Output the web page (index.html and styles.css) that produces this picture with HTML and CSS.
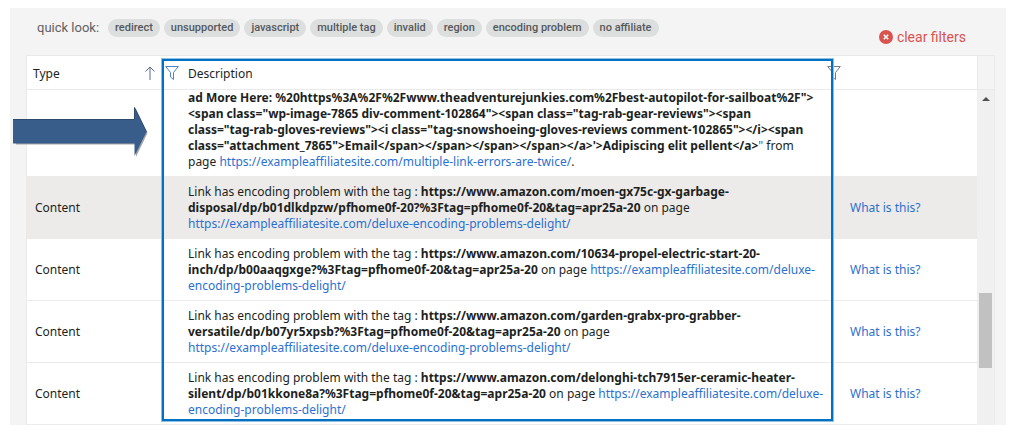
FILE: index.html
```html
<!DOCTYPE html>
<html lang="en">
<head>
<meta charset="utf-8">
<title>Link issues</title>
<link rel="stylesheet" href="styles.css">
</head>
<body>
<main class="panel">
  <header class="toolbar">
    <div class="quick">
      <span class="quick-label">quick look:</span>
      <div class="chips">
        <button class="chip" type="button">redirect</button>
        <button class="chip" type="button">unsupported</button>
        <button class="chip" type="button">javascript</button>
        <button class="chip" type="button">multiple tag</button>
        <button class="chip" type="button">invalid</button>
        <button class="chip" type="button">region</button>
        <button class="chip" type="button">encoding problem</button>
        <button class="chip" type="button">no affiliate</button>
      </div>
    </div>
    <button class="clear" type="button">
      <svg class="clear-icon" viewBox="0 0 14 14" aria-hidden="true"><circle cx="7" cy="7" r="7" fill="#d9534f"/><path d="M4.8 4.8l4.4 4.4M9.2 4.8l-4.4 4.4" stroke="#fff" stroke-width="1.5"/></svg>
      clear filters
    </button>
  </header>

  <div class="grid">
    <table class="table">
      <colgroup><col class="col-type"><col><col class="col-help"></colgroup>
      <thead>
        <tr>
          <th class="type" scope="col">
            <div class="head">
              <span>Type</span>
              <span class="tools">
                <svg class="sort" viewBox="0 0 10 14" aria-hidden="true"><path d="M5 14V1M.5 5.5L5 1l4.5 4.5" fill="none" stroke="#5a6a94"/></svg>
                <button class="filter" type="button" aria-label="Filter type"><svg viewBox="0 0 14 14" aria-hidden="true"><path d="M.7.5h12.6L8.5 6.5v7L5.5 11V6.5z" fill="none" stroke="#4a84d0"/></svg></button>
              </span>
            </div>
          </th>
          <th scope="col">
            <div class="head">
              <span>Description</span>
              <button class="filter" type="button" aria-label="Filter description"><svg viewBox="0 0 14 14" aria-hidden="true"><path d="M.7.5h12.6L8.5 6.5v7L5.5 11V6.5z" fill="none" stroke="#6b7c90"/></svg></button>
            </div>
          </th>
          <th scope="col"></th>
        </tr>
      </thead>
      <tbody>
        <tr class="partial">
          <td></td>
          <td><b>ad More Here: %20https%3A%2F%2Fwww.theadventurejunkies.com%2Fbest-autopilot-for-sailboat%2F"&gt;<br>&lt;span class="wp-image-7865 div-comment-102864"&gt;&lt;span class="tag-rab-gear-reviews"&gt;&lt;span<br>class="tag-rab-gloves-reviews"&gt;&lt;i class="tag-snowshoeing-gloves-reviews comment-102865"&gt;&lt;/i&gt;&lt;span<br>class="attachment_7865"&gt;Email&lt;/span&gt;&lt;/span&gt;&lt;/span&gt;&lt;/span&gt;&lt;/a&gt;'&gt;Adipiscing elit pellent&lt;/a&gt;</b><span class="quote">"</span> from<br>page <a href="#twice">https://exampleaffiliatesite.com/multiple-link-errors-are-twice/</a>.</td>
          <td></td>
        </tr>
        <tr class="selected">
          <td>Content</td>
          <td>Link has encoding problem with the tag : <b>https://www.amazon.com/moen-gx75c-gx-garbage-<br>disposal/dp/b01dlkdpzw/pfhome0f-20?%3Ftag=pfhome0f-20&amp;tag=apr25a-20</b> on page<br><a href="#delight">https://exampleaffiliatesite.com/deluxe-encoding-problems-delight/</a></td>
          <td><a href="#help">What is this?</a></td>
        </tr>
        <tr>
          <td>Content</td>
          <td>Link has encoding problem with the tag : <b>https://www.amazon.com/10634-propel-electric-start-20-<br>inch/dp/b00aaqgxge?%3Ftag=pfhome0f-20&amp;tag=apr25a-20</b> on page <a href="#delight">https://exampleaffiliatesite.com/deluxe-<br>encoding-problems-delight/</a></td>
          <td><a href="#help">What is this?</a></td>
        </tr>
        <tr>
          <td>Content</td>
          <td>Link has encoding problem with the tag : <b>https://www.amazon.com/garden-grabx-pro-grabber-<br>versatile/dp/b07yr5xpsb?%3Ftag=pfhome0f-20&amp;tag=apr25a-20</b> on page<br><a href="#delight">https://exampleaffiliatesite.com/deluxe-encoding-problems-delight/</a></td>
          <td><a href="#help">What is this?</a></td>
        </tr>
        <tr>
          <td>Content</td>
          <td>Link has encoding problem with the tag : <b>https://www.amazon.com/delonghi-tch7915er-ceramic-heater-<br>silent/dp/b01kkone8a?%3Ftag=pfhome0f-20&amp;tag=apr25a-20</b> on page <a href="#delight">https://exampleaffiliatesite.com/deluxe-<br>encoding-problems-delight/</a></td>
          <td><a href="#help">What is this?</a></td>
        </tr>
      </tbody>
    </table>
    <div class="rail" aria-hidden="true">
      <div class="rail-head"></div>
      <div class="track">
        <svg class="up" viewBox="0 0 8 4"><path d="M0 4L4 0l4 4z" fill="#505050"/></svg>
        <div class="thumb"></div>
      </div>
    </div>
    <div class="highlight"></div>
    <svg class="arrow" viewBox="0 0 136 52" aria-hidden="true"><path d="M3 14h120V2l11.500 24-11.500 24V37.500H3z" fill="#a5a5a5"/><path d="M0 12.500h121.500V.5L133.500 25l-12 24V36.500H0z" fill="#385d8a"/><path d="M0 12.500h121.500V.5L133.500 25" fill="none" stroke="#2c4a70"/></svg>
  </div>
</main>
</body>
</html>
```
FILE: styles.css
```css
* { box-sizing: border-box; }
body {
  margin: 0;
  padding: 8px 13px 22px 10px;
  background: #fff;
  color: #201f1e;
  font: 12px/16px "Noto Sans", "Open Sans", sans-serif;
}
button { border: 0; padding: 0; background: none; cursor: pointer; }
a { color: #2b70d0; text-decoration: none; }

.panel { padding: 0 11px 0 16px; background: #f4f4f4; }
.toolbar {
  display: flex;
  justify-content: space-between;
  align-items: flex-start;
  height: 47px;
  padding: 11px 29px 0 11px;
  font-family: Roboto, sans-serif;
}
.quick { display: flex; gap: 9px; }
.quick-label { color: #5f6064; font-size: 13px; line-height: 18px; }
.chips { display: flex; gap: 4px; }
.chip {
  height: 18px;
  padding: 0 7px;
  border-radius: 9px;
  background: #dddfde;
  color: #55585b;
  font: 500 11px/18px Roboto, sans-serif;
}
.clear {
  display: flex;
  align-items: center;
  gap: 4px;
  margin-top: 9px;
  color: #d9534f;
  font: 14px/18px Roboto, sans-serif;
}
.clear-icon { width: 14px; height: 14px; }

.grid {
  position: relative;
  display: flex;
  border: solid #eaeaea;
  border-width: 1px 1px 0;
  background: #fff;
}
.table { width: 100%; min-width: 0; border-collapse: separate; border-spacing: 0; table-layout: fixed; }
.col-type { width: 153px; }
.col-help { width: 135px; }
th {
  height: 34px;
  padding: 2px 1px 0 8px;
  border-bottom: 1px solid #eaeaea;
  text-align: left;
  font-weight: 400;
}
th.type { padding-left: 6px; }
.head { display: flex; justify-content: space-between; align-items: flex-start; }
.tools { display: flex; gap: 10px; }
.sort { width: 10px; height: 14px; }
.filter { width: 14px; height: 14px; }
.filter svg { display: block; width: 14px; height: 14px; }
td {
  padding: 7px 0 6px 8px;
  border-bottom: 1px solid #edebe9;
  white-space: nowrap;
}
.partial td { padding: 0 0 6px 8px; }
.selected td { background: #edebe9; }
.quote { color: #2f6a96; }

.rail { display: flex; flex: none; flex-direction: column; width: 17px; }
.rail-head { height: 34px; border: solid #eaeaea; border-width: 0 0 1px 1px; background: #f4f4f4; }
.track {
  display: flex;
  flex: 1;
  flex-direction: column;
  justify-content: space-between;
  align-items: center;
  padding: 7px 2px 57px;
  background: #f0f0f0;
}
.up { width: 8px; height: 4px; }
.thumb { width: 13px; height: 75px; background: #c1c1c1; }

.highlight {
  position: absolute;
  inset: 3px 161px 4px 135px;
  border: 2px solid #0070c0;
  box-shadow: 0 0 0 1px #8fc0e3;
  pointer-events: none;
}
.arrow { position: absolute; left: -14px; top: 51px; width: 136px; height: 52px; }
```
